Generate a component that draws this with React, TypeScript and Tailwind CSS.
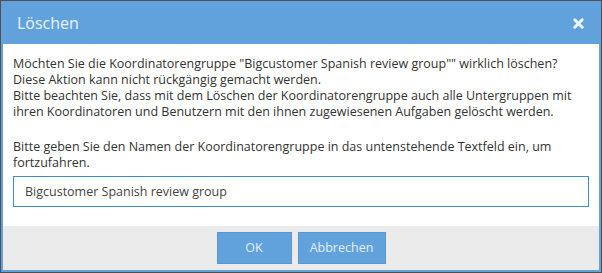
import React from "react";

export default function App() {
  return (
    <div
      className="w-[602px] h-[273px] border border-[#4f4f4f] bg-[#62a2dc] flex flex-col"
      style={{ fontFamily: '"Open Sans", "Liberation Sans", sans-serif' }}
    >
      <div className="flex-1 flex flex-col border-x-2 border-b-2 border-[#62a2dc]">
        <div className="h-[43px] shrink-0 bg-[#62a2dc] flex items-center justify-between pl-[14px] pr-[15px]">
          <span className="text-[16px] text-[#eaf2fb] leading-none">Löschen</span>
          <svg width="11" height="11" viewBox="0 0 11 11" className="mt-[1px]">
            <path d="M1.8 1.8 L9.2 9.2 M9.2 1.8 L1.8 9.2" stroke="#eef4fb" strokeWidth="3" strokeLinecap="round" />
          </svg>
        </div>
        <div className="bg-white h-[182px] shrink-0 pt-[12px] px-[10px] text-[12.5px] leading-[16px] text-[#333333]">
          <p>
            Möchten Sie die Koordinatorengruppe "Bigcustomer Spanish review group"" wirklich löschen?
            <br />
            Diese Aktion kann nicht rückgängig gemacht werden.
            <br />
            Bitte beachten Sie, dass mit dem Löschen der Koordinatorengruppe auch alle Untergruppen mit
            <br />
            ihren Koordinatoren und Benutzern mit den ihnen zugewiesenen Aufgaben gelöscht werden.
          </p>
          <p className="mt-[19px]">
            Bitte geben Sie den Namen der Koordinatorengruppe in das untenstehende Textfeld ein, um
            <br />
            fortzufahren.
          </p>
          <div className="mt-[5px] h-[31px] w-[576px] border border-[#3d8fd4] flex items-center px-[11px] text-[12.5px] text-[#444444]">
            Bigcustomer Spanish review group
          </div>
        </div>
        <div className="flex-1 bg-[#ebebeb] flex justify-center items-start pt-[6px] gap-[6px]">
          <button className="w-[75px] h-[32px] bg-[#62a2dc] border border-[#5897d2] text-[12.5px] text-[#e3eef9]">
            OK
          </button>
          <button className="w-[88px] h-[32px] bg-[#62a2dc] border border-[#5897d2] text-[12.5px] text-[#e3eef9]">
            Abbrechen
          </button>
        </div>
      </div>
    </div>
  );
}
